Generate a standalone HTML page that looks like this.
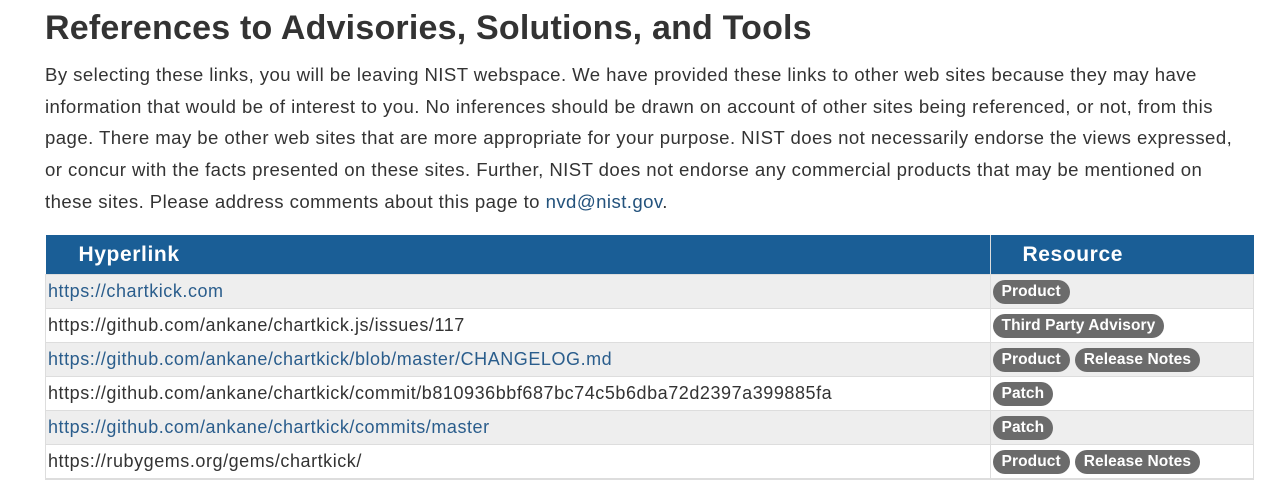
<!DOCTYPE html>
<html><head><style>
body{margin:0;background:#fff;font-family:"Liberation Sans",sans-serif;color:#333;}
h2{position:absolute;left:45px;top:9px;margin:0;font-size:34px;font-weight:bold;color:#333;letter-spacing:0.2px;white-space:nowrap}
p{position:absolute;left:45px;top:59px;width:1220px;margin:0;font-size:18.6px;line-height:31.7px;color:#333;white-space:nowrap;letter-spacing:0.43px}
p a{color:#23527c;text-decoration:none}
table{position:absolute;left:45px;top:235px;width:1209px;border-collapse:collapse;font-size:18px;letter-spacing:0.55px}
th{background:#1a5e96;color:#fff;height:39px;text-align:left;font-size:21px;font-weight:bold;padding:0;letter-spacing:0.6px}
th.h1{padding-left:33px;width:911px;border-right:1px solid #ddd}
th.h2{padding-left:32px}
td{height:33px;padding:0 0 0 2px;border-top:1px solid #ddd;vertical-align:middle;white-space:nowrap}
td:first-child{border-left:1px solid #ddd;border-right:1px solid #ddd}
td:last-child{border-right:1px solid #ddd;padding-left:2px}
tr.g td{background:#eee}
tr:last-child td{border-bottom:2px solid #ddd}
td a{color:#2a5d8c;text-decoration:none}
td span.t{color:#333}
.b{display:inline-block;background:#6b6b6b;color:#fff;font-weight:bold;font-size:15.5px;border-radius:12px;padding:3px 9px 4px;margin-right:5px;line-height:17px;letter-spacing:0.1px}
</style></head><body>
<h2>References to Advisories, Solutions, and Tools</h2>
<p>By selecting these links, you will be leaving NIST webspace. We have provided these links to other web sites because they may have<br>information that would be of interest to you. No inferences should be drawn on account of other sites being referenced, or not, from this<br>page. There may be other web sites that are more appropriate for your purpose. NIST does not necessarily endorse the views expressed,<br>or concur with the facts presented on these sites. Further, NIST does not endorse any commercial products that may be mentioned on<br>these sites. Please address comments about this page to <a>nvd@nist.gov</a>.</p>
<table>
<tr><th class="h1">Hyperlink</th><th class="h2">Resource</th></tr>
<tr class="g"><td><a>https://chartkick.com</a></td><td><span class="b">Product</span></td></tr>
<tr><td><span class="t">https://github.com/ankane/chartkick.js/issues/117</span></td><td><span class="b">Third Party Advisory</span></td></tr>
<tr class="g"><td><a>https://github.com/ankane/chartkick/blob/master/CHANGELOG.md</a></td><td><span class="b">Product</span><span class="b">Release Notes</span></td></tr>
<tr><td><span class="t">https://github.com/ankane/chartkick/commit/b810936bbf687bc74c5b6dba72d2397a399885fa</span></td><td><span class="b">Patch</span></td></tr>
<tr class="g"><td><a>https://github.com/ankane/chartkick/commits/master</a></td><td><span class="b">Patch</span></td></tr>
<tr><td><span class="t">https://rubygems.org/gems/chartkick/</span></td><td><span class="b">Product</span><span class="b">Release Notes</span></td></tr>
</table>
</body></html>
